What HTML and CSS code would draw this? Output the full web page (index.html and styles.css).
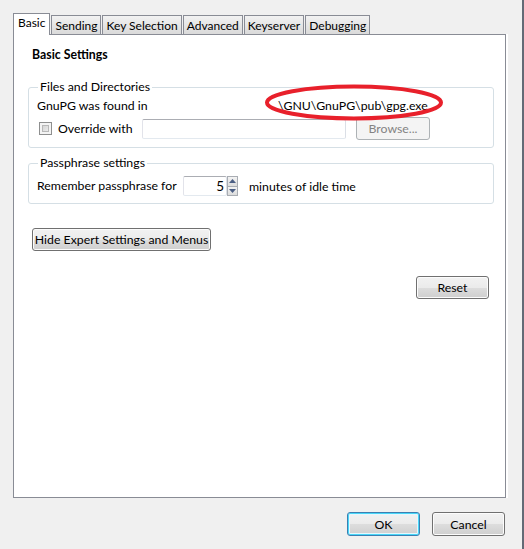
FILE: index.html
```html
<!DOCTYPE html>
<html>
<head>
<meta charset="utf-8">
<link rel="stylesheet" href="styles.css">
</head>
<body>
<div class="window">
  <div class="tabs">
    <div class="tab active">Basic</div>
    <div class="tab">Sending</div>
    <div class="tab">Key Selection</div>
    <div class="tab">Advanced</div>
    <div class="tab">Keyserver</div>
    <div class="tab">Debugging</div>
  </div>
  <div class="panel">
    <div class="heading">Basic Settings</div>
    <fieldset class="group first">
      <legend>Files and Directories</legend>
      <div class="row found">
        <span class="label wide">GnuPG was found in</span>
        <span class="path">\GNU\GnuPG\pub\gpg.exe<svg class="circle" width="180" height="37" viewBox="0 0 180 37"><ellipse cx="90" cy="18.5" rx="87" ry="16" fill="none" stroke="#e8202b" stroke-width="4"/></svg></span>
      </div>
      <div class="row override">
        <label class="check-label"><span class="checkbox"></span>Override with</label>
        <span class="textbox path-box"></span>
        <span class="button disabled browse">Browse...</span>
      </div>
    </fieldset>
    <fieldset class="group second">
      <legend>Passphrase settings</legend>
      <div class="row pass">
        <span class="label pass-label">Remember passphrase for</span>
        <span class="textbox spin-box">5</span>
        <span class="spin">
          <span class="spin-btn up"><svg width="7" height="4" viewBox="0 0 7 4"><path d="M0 4 L3.5 0 L7 4 Z" fill="#4b5e83"/></svg></span>
          <span class="spin-btn down"><svg width="7" height="4" viewBox="0 0 7 4"><path d="M0 0 L3.5 4 L7 0 Z" fill="#4b5e83"/></svg></span>
        </span>
        <span class="after">minutes of idle time</span>
      </div>
    </fieldset>
    <div class="expert-row">
      <span class="button expert">Hide Expert Settings and Menus</span>
    </div>
    <div class="reset-row">
      <span class="button reset">Reset</span>
    </div>
  </div>
  <div class="footer">
    <span class="button default ok">OK</span>
    <span class="button cancel">Cancel</span>
  </div>
</div>
</body>
</html>
```
FILE: styles.css
```css
* { box-sizing: border-box; }
html, body { margin: 0; padding: 0; }
body {
  background: #f0f0f0;
  font-family: Lato, "Noto Sans", sans-serif;
  font-size: 12.3px;
  color: #000;
  width: 524px;
  height: 549px;
  overflow: hidden;
}
.window {
  width: 524px;
  height: 549px;
  border-right: 2px solid #646a76;
}
.tabs {
  display: flex;
  align-items: flex-end;
  padding: 13px 0 0 13px;
  height: 34px;
  gap: 1px;
}
.tab {
  height: 19px;
  line-height: 19px;
  padding: 0 3px;
  border: 1px solid #898c95;
  border-bottom: none;
  background: linear-gradient(#f2f2f2, #e6e6e6 50%, #dadada);
  white-space: nowrap;
  font-size: 12px;
}
.tab.active {
  height: 22px;
  line-height: 18px;
  padding: 0 4px;
  background: #fff;
  margin-bottom: -1px;
  position: relative;
  z-index: 1;
}
.panel {
  margin: 0 0 0 13px;
  width: 493px;
  height: 464px;
  border: 1px solid #898c95;
  background: #fff;
  box-shadow: 2px 0 0 #fff;
  padding: 12px 11px 0 14px;
}
.heading {
  font-weight: bold;
  line-height: 16px;
  padding-left: 4px;
  margin-bottom: 16px;
}
.group {
  margin: 0;
  border: 1px solid #d5dfe5;
  border-radius: 3px;
  padding: 0 8px 7px 8px;
  min-width: 0;
}
.group legend {
  padding: 0 2px;
  margin-left: 1px;
  line-height: 16px;
}
.group.second { margin-top: 7px; }
.row {
  display: flex;
  align-items: center;
}
.row.found { height: 16px; margin-top: 3px; }
.row.override { height: 23px; margin-top: 3px; }
.row.pass { height: 20px; margin-top: 5px; }
.label { line-height: 16px; white-space: nowrap; }
.label.wide { width: 241px; }
.path { position: relative; line-height: 16px; }
.circle {
  position: absolute;
  left: -14px;
  top: -14px;
}
.check-label {
  display: flex;
  align-items: center;
  width: 105px;
  white-space: nowrap;
}
.checkbox {
  width: 13px;
  height: 13px;
  margin: 0 6px 0 2px;
  border: 1px solid #8e8f8f;
  background: linear-gradient(135deg, #cbcbcb, #f6f6f6);
  box-shadow: inset 0 0 0 2px #f4f4f4, inset 0 0 0 3px #b8b8b8;
}
.textbox {
  height: 20px;
  border: 1px solid #abadb3;
  border-color: #abadb3 #dbdfe6 #e3e9ef #e2e3ea;
  background: #fff;
  border-radius: 2px;
}
.path-box { width: 204px; }
.button {
  display: inline-flex;
  align-items: center;
  justify-content: center;
  height: 23px;
  border: 1px solid #707070;
  border-radius: 3px;
  background: linear-gradient(#f2f2f2, #ebebeb 50%, #dddddd 51%, #cfcfcf);
  box-shadow: inset 0 0 0 1px #fcfcfc;
  white-space: nowrap;
}
.button.disabled {
  border-color: #adb2b5;
  background: #f4f4f4;
  color: #838383;
  box-shadow: none;
}
.browse { width: 74px; margin-left: 10px; }
.pass-label { width: 146px; }
.spin-box {
  width: 44px;
  text-align: right;
  padding-right: 2px;
  line-height: 18px;
  font-size: 13.5px;
}
.spin {
  display: flex;
  flex-direction: column;
  width: 11px;
  height: 20px;
}
.spin-btn {
  flex: 1;
  display: flex;
  align-items: center;
  justify-content: center;
  border: 1px solid #a9adb3;
  background: linear-gradient(#f3f3f3, #dcdcdc);
}
.spin-btn.down { border-top: none; }
.after { margin-left: 11px; }
.expert-row { display: flex; margin-top: 24px; padding-left: 4px; }
.expert { width: 179px; }
.reset-row {
  margin-top: 25px;
  display: flex;
  justify-content: flex-end;
  padding-right: 5px;
}
.reset { width: 73px; height: 23px; }
.footer {
  display: flex;
  justify-content: flex-end;
  gap: 12px;
  margin-top: 14px;
  padding-right: 17px;
}
.ok, .cancel { width: 73px; height: 24px; }
.button.default {
  border-color: #3c7fb1;
  box-shadow: inset 0 0 0 1px #48d6f8, inset 0 0 0 2px #e6f6fd;
}
```
